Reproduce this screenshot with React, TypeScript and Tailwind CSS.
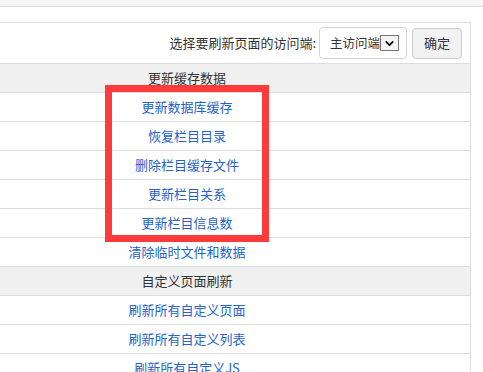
import { ChevronDown } from 'lucide-react'

const SECTIONS = [
  {
    title: '更新缓存数据',
    links: ['更新数据库缓存', '恢复栏目目录', '删除栏目缓存文件', '更新栏目关系', '更新栏目信息数', '清除临时文件和数据'],
  },
  {
    title: '自定义页面刷新',
    links: ['刷新所有自定义页面', '刷新所有自定义列表', '刷新所有自定义JS'],
  },
]

export default function App() {
  return (
    <div
      className="relative h-[372px] overflow-hidden bg-white text-[13px] text-[#333]"
      style={{ fontFamily: '"Microsoft YaHei", "Noto Sans CJK SC", "Liberation Sans", sans-serif' }}
    >
      {/* top strip */}
      <div className="h-[7px] border-b border-[#dcdcdc] bg-[#f5f5f5]" />

      <div className="flex pt-[15px] pr-[12px]">
        <div className="-ml-[97px] flex-1 border-l border-r border-t border-[#ddd] bg-white">
          {/* toolbar */}
          <div className="flex h-[41px] items-center justify-end border-b border-[#ddd] pr-[8px]">
            <span>选择要刷新页面的访问端:</span>
            <div className="ml-[3px] flex h-[32px] w-[88px] items-center rounded-[4px] border border-[#d4d4d4] bg-white pl-[10px]">
              <span className="text-[12.5px]">主访问端</span>
              <span className="flex h-[16px] w-[19px] items-center justify-center border border-[#777] bg-[#f4f4f4]">
                <ChevronDown className="h-[13px] w-[13px] text-black" strokeWidth={3} />
              </span>
            </div>
            <button
              type="button"
              className="ml-[5px] h-[31px] w-[50px] rounded-[4px] border border-[#ccc] bg-[#f2f2f2] text-[#333]"
            >
              确定
            </button>
          </div>

          {SECTIONS.map((s) => (
            <div key={s.title}>
              <div className="flex h-[29px] items-center justify-center border-b border-[#ddd] bg-[#f0f0f0]">
                {s.title}
              </div>
              {s.links.map((l) => (
                <div key={l} className="flex h-[29px] items-center justify-center border-b border-[#ddd]">
                  <a href="#" className="text-[#2563c9]">{l}</a>
                </div>
              ))}
            </div>
          ))}
        </div>
      </div>

      {/* highlight box */}
      <div className="absolute left-[105px] top-[85px] h-[157px] w-[164px] border-[7px] border-[#fe3b3b]" />
    </div>
  )
}
